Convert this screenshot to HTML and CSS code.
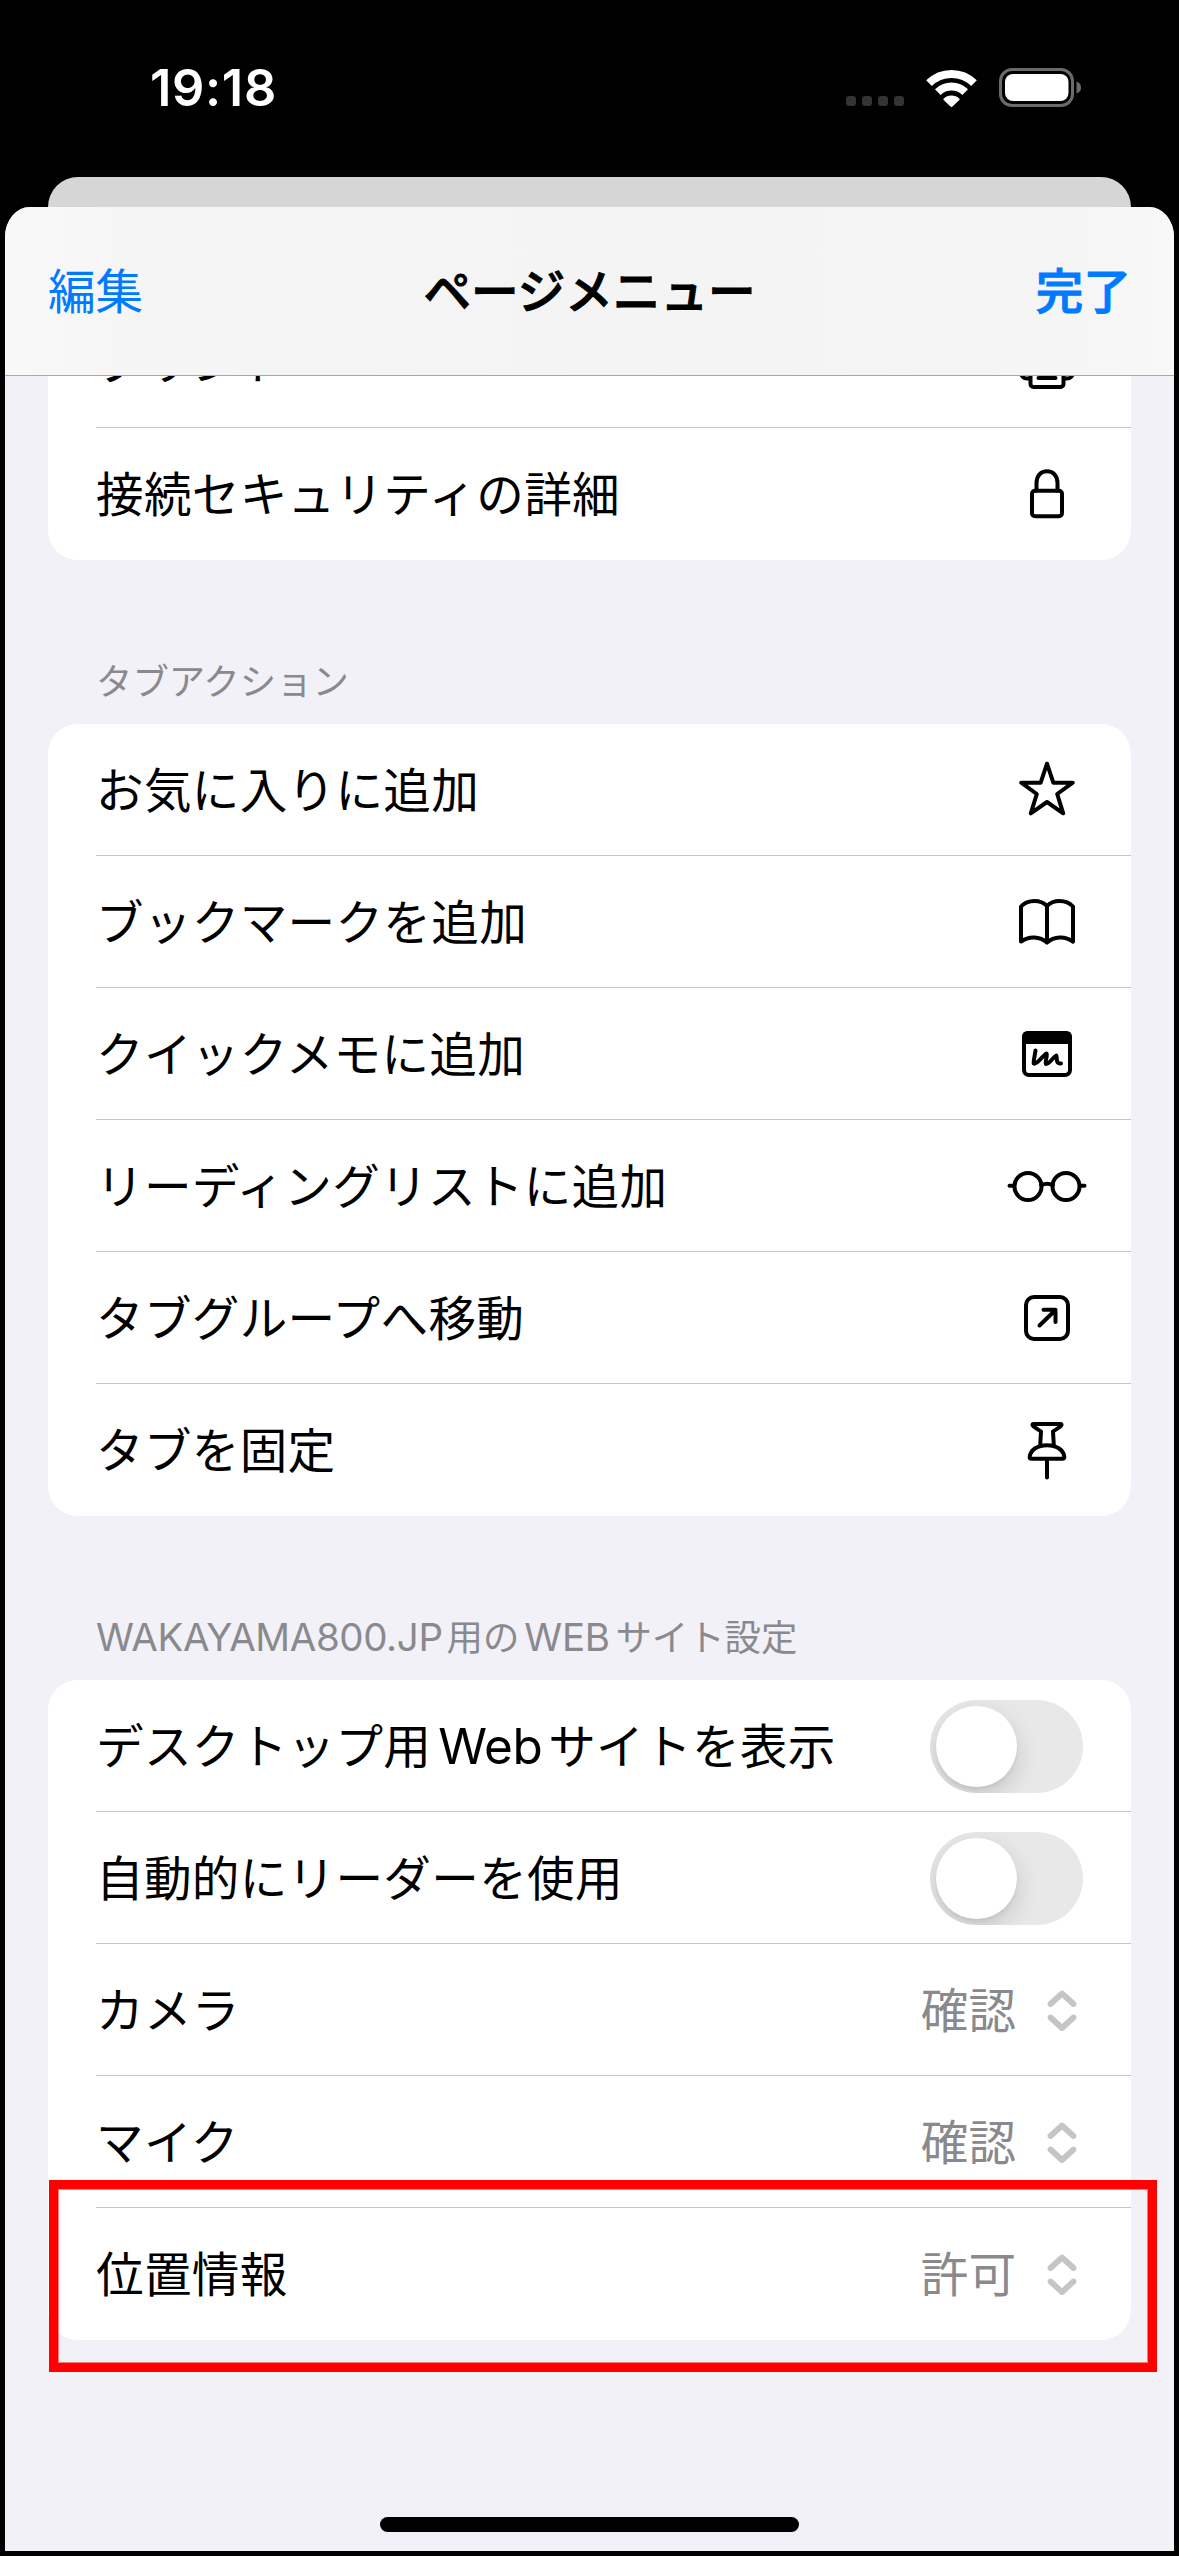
FILE: index.html
```
<!DOCTYPE html>
<html lang="ja">
<head>
<meta charset="utf-8">
<title>ページメニュー</title>
<link rel="stylesheet" href="styles.css">
</head>
<body>
<div class="screen">
  <header class="status">
    <span class="time">19:18</span>
    <div class="indicators">
      <div class="signal"><i></i><i></i><i></i><i></i></div>
      <svg class="wifi" viewBox="0 0 51 38" width="51" height="38">
        <g fill="none" stroke="#fff">
          <path stroke-width="8" d="M3 14.2A32 32 0 0 1 48 14.2"/>
          <path stroke-width="8" d="M11.8 23.2A19.5 19.5 0 0 1 39.2 23.2"/>
        </g>
        <path fill="#fff" d="M17.6 29.8a11.2 11.2 0 0 1 15.8 0q.4.6 0 1.1l-7.2 6.8q-.7.5-1.4 0l-7.2-6.8q-.4-.5 0-1.1z"/>
      </svg>
      <svg class="battery" viewBox="0 0 82 39" width="82" height="39">
        <rect x="1.5" y="1.5" width="72" height="36" rx="11.5" fill="none" stroke="#6b6b6b" stroke-width="3"/>
        <rect x="6" y="6" width="63.5" height="27" rx="8" fill="#fff"/>
        <path fill="#6b6b6b" d="M77.500 13.500q4.500 1.500 4.500 6t-4.500 6z"/>
      </svg>
    </div>
  </header>
  <div class="backcard"></div>
  <main class="sheet">
    <nav class="nav">
      <span class="edit">編集</span>
      <h1 class="title">ページメニュー</h1>
      <span class="done">完了</span>
    </nav>
    <div class="content">
      <section class="card clipped">
        <div class="row"><span class="label">プリント</span>
          <svg class="icon" viewBox="-48 -48 96 96"><rect x="-26" y="-13" width="52" height="29.500" rx="6"/><path d="M-16-13v-11h32v11"/><rect x="-16.500" y="5" width="33" height="20" rx="3" fill="#fff"/><path d="M-8.500 16H8.500"/></svg>
        </div>
        <div class="row"><span class="label">接続セキュリティの詳細</span>
          <svg class="icon" viewBox="-48 -48 96 96"><rect x="-15" y="-3.200" width="30" height="25.500" rx="3"/><path d="M-10.500-3.500V-11C-10.500-18.500-6-22.800 0-22.800S10.500-18.500 10.500-11V-3.500"/></svg>
        </div>
      </section>

      <h2 class="heading">タブアクション</h2>
      <section class="card">
        <div class="row"><span class="label">お気に入りに追加</span>
          <svg class="icon" viewBox="-48 -48 96 96"><path d="M0-26.300L6.300-7.300H25.800L10.200 4L16.200 23.300L0 12L-16.200 23.300L-10.200 4L-25.800-7.300H-6.300Z"/></svg>
        </div>
        <div class="row"><span class="label">ブックマークを追加</span>
          <svg class="icon" viewBox="-48 -48 96 96"><path d="M0-16C-6-22.600-19-23-26-15.500V19.600C-18 13.500-7 14.200 0 20.600C7 14.200 18 13.500 26 19.600V-15.500C19-23 6-22.600 0-16ZM0-16V20.600"/></svg>
        </div>
        <div class="row"><span class="label">クイックメモに追加</span>
          <svg class="icon" viewBox="-48 -48 96 96"><rect x="-23" y="-21" width="46" height="42" rx="5"/><path class="solid" d="M-23-12v-5q0-4 4-4h38q4 0 4 4v5z"/><path d="M-11.500-3.500C-12 1-13.500 6-13.300 9.500C-10 11-4 1-.5-.5C1 1-2.500 8-1 10C3 10 6 3 9.300 1.500C10.500 3 8 10 14 9.500"/></svg>
        </div>
        <div class="row"><span class="label">リーディングリストに追加</span>
          <svg class="icon" viewBox="-48 -48 96 96"><circle cx="-19" cy=".5" r="13.500"/><circle cx="19" cy=".5" r="13.500"/><path d="M-5.800-.8Q0-3.500 5.800-.8M-37.500-.2H-33M33-.2H37.500"/></svg>
        </div>
        <div class="row"><span class="label">タブグループへ移動</span>
          <svg class="icon" viewBox="-48 -48 96 96"><rect x="-21" y="-21" width="42" height="42" rx="8"/><path d="M-7.500 7.500L8.500-8M-3.500-8.300H8.500V4"/></svg>
        </div>
        <div class="row"><span class="label">タブを固定</span>
          <svg class="icon" viewBox="-48 -48 96 96"><path d="M-6.800-5L-6-18.500C-9-21-13-22-14.500-25Q-14.700-26 -13.500-26H13.500Q14.700-26 14.500-25C13-22 9-21 6-18.500L6.800-5M-15.500 8.800Q-17.300 8.800-17.300 7C-16.500-.5-9-4.800 0-4.800S16.500-.5 17.300 7Q17.300 8.800 15.500 8.800ZM0 9V27.500"/></svg>
        </div>
      </section>

      <h2 class="heading"><span class="latin host">WAKAYAMA800.JP</span>用の<span class="latin web">WEB</span>サイト設定</h2>
      <section class="card">
        <div class="row"><span class="label">デスクトップ用<span class="latin web">Web</span>サイトを表示</span><span class="toggle"></span></div>
        <div class="row"><span class="label">自動的にリーダーを使用</span><span class="toggle"></span></div>
        <div class="row"><span class="label">カメラ</span><span class="value">確認</span>
          <svg class="chevrons" viewBox="-16 -24 32 48"><path d="M-11.500-6L0-16.500L11.500-6M-11.500 7.500L0 18L11.500 7.500"/></svg></div>
        <div class="row"><span class="label">マイク</span><span class="value">確認</span>
          <svg class="chevrons" viewBox="-16 -24 32 48"><path d="M-11.500-6L0-16.500L11.500-6M-11.500 7.500L0 18L11.500 7.500"/></svg></div>
        <div class="row"><span class="label">位置情報</span><span class="value">許可</span>
          <svg class="chevrons" viewBox="-16 -24 32 48"><path d="M-11.500-6L0-16.500L11.500-6M-11.500 7.500L0 18L11.500 7.500"/></svg></div>
      </section>
    </div>
    <div class="home"></div>
  </main>
  <div class="marker"></div>
</div>
</body>
</html>
```
FILE: styles.css
```
* { box-sizing: border-box; }

body {
  margin: 0;
  background: #000;
  font-family: "Noto Sans CJK JP", sans-serif;
  font-size: 47.6px;
  color: #000;
}

.screen {
  position: relative;
  display: flex;
  flex-direction: column;
  width: 1179px;
  height: 2556px;
  padding: 0 5px 5px;
  overflow: hidden;
  background: #000;
}

/* Status bar */
.status {
  display: flex;
  flex: none;
  align-items: center;
  justify-content: space-between;
  height: 177px;
  padding: 0 93px 2px 145px;
}
.time {
  font: 600 50.5px/60px Inter, sans-serif;
  letter-spacing: .7px;
  color: #fff;
}
.indicators { display: flex; align-items: center; }
.signal {
  display: flex;
  gap: 6px;
  margin: 27px 22px 0 0;
}
.signal i {
  width: 10px;
  height: 10px;
  border-radius: 3px;
  background: #333;
}
.wifi { margin-right: 22px; }

/* Sheet */
.backcard {
  flex: none;
  height: 30px;
  margin: 0 43px;
  border-radius: 30px 30px 0 0;
  background: #d6d6d6;
}
.sheet {
  display: flex;
  flex: 1;
  flex-direction: column;
  min-height: 0;
  margin: 0 -5px -5px;
  border: solid #000;
  border-width: 0 5px 5px;
  border-radius: 30px 30px 0 0;
  overflow: hidden;
  background: #f2f1f7;
}
.nav {
  display: grid;
  flex: none;
  grid-template-columns: 1fr auto 1fr;
  align-items: center;
  height: 169px;
  padding: 0 43px 6px;
  border-bottom: 1px solid #a9a9ab;
  background: linear-gradient(90deg, #f9f9f9, #f5f5f5 12%, #f4f4f4 60%, #f5f5f5 90%, #f8f8f8);
}
.title {
  margin: 0;
  font-size: 47.6px;
  font-weight: 500;
  -webkit-text-stroke: 1px currentColor;
}
.edit, .done { color: #007aff; }
.done {
  justify-self: end;
  font-weight: 500;
  -webkit-text-stroke: 1px currentColor;
}

/* Lists */
.content {
  flex: 1;
  min-height: 0;
  padding: 0 43px;
  overflow: hidden;
}
.card {
  border-radius: 30px;
  overflow: hidden;
  background: #fff;
}
.clipped { margin-top: -80px; }
.row {
  display: flex;
  align-items: center;
  height: 132px;
  margin-left: 48px;
  border-bottom: 1px solid #c6c6c8;
}
.row:last-child { border-bottom: 0; }
.label {
  flex: 1;
  padding-bottom: 5px;
  letter-spacing: .3px;
  white-space: nowrap;
}
.heading {
  height: 164px;
  margin: 0;
  padding: 76px 0 0 48px;
  font-size: 36.4px;
  font-weight: 400;
  line-height: 87px;
  white-space: nowrap;
  color: #8a8a8e;
}
.latin { font-family: Inter, sans-serif; line-height: 1; }
.heading .latin { font-size: 38.5px; letter-spacing: -.4px; }
.heading .host { margin-right: 4px; }
.heading .web { margin: 0 6px 0 5px; }
.label .latin { font-size: 49.5px; letter-spacing: -.5px; margin: 0 6px 0 7px; }

.icon {
  width: 96px;
  height: 96px;
  margin-right: 36px;
  fill: none;
  stroke: #000;
  stroke-width: 4;
  stroke-linecap: round;
  stroke-linejoin: round;
}
.icon .solid { fill: #000; }

.toggle {
  width: 153px;
  height: 93px;
  margin: 2px 48px 0 0;
  padding: 6px;
  border-radius: 47px;
  overflow: hidden;
  background: #e8e8e9;
}
.toggle::before {
  content: "";
  display: block;
  width: 81px;
  height: 81px;
  border-radius: 50%;
  background: #fff;
  box-shadow: 0 9px 24px rgba(0, 0, 0, .15), 0 3px 3px rgba(0, 0, 0, .05);
}
.value {
  padding-bottom: 5px;
  color: #8a8a8e;
}
.chevrons {
  width: 32px;
  height: 48px;
  margin: 0 53px 0 30px;
  fill: none;
  stroke: #c5c5c7;
  stroke-width: 5.8;
  stroke-linecap: round;
  stroke-linejoin: round;
}

.home {
  flex: none;
  align-self: center;
  width: 419px;
  height: 15px;
  margin-bottom: 19px;
  border-radius: 8px;
  background: #000;
}

/* Highlight drawn over the location row */
.marker {
  position: absolute;
  left: 49px;
  top: 2180px;
  width: 1108px;
  height: 192px;
  border: 9px solid #f00;
  box-shadow: inset 0 0 0 1px rgba(255, 0, 0, .5);
}
```
